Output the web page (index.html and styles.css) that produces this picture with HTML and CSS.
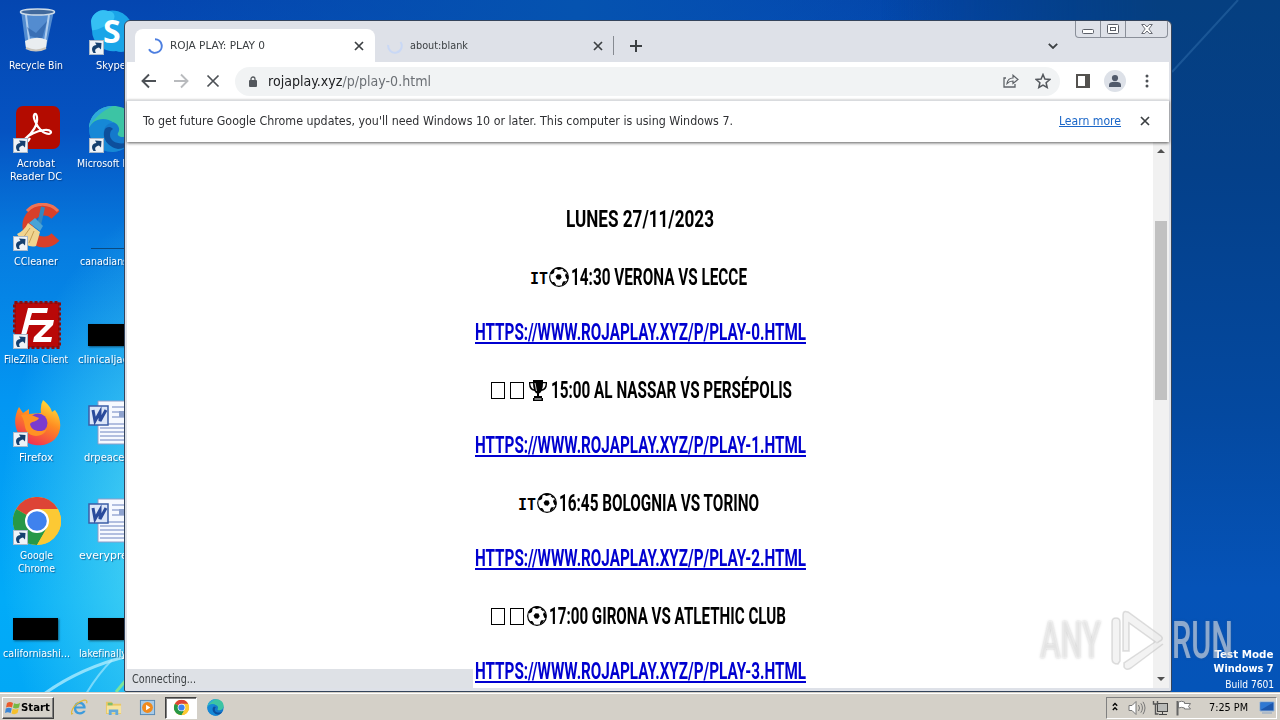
FILE: index.html
```html
<!DOCTYPE html>
<html lang="es">
<head>
  <meta charset="UTF-8" />
  <title>ROJA PLAY: PLAY 0</title>
  <link rel="stylesheet" href="styles.css">
</head>
<body>

  <!-- shared icons -->
  <svg class="defs" width="0" height="0">
    <symbol id="shortcut" viewBox="0 0 15 15">
      <rect x=".5" y=".5" width="14" height="14" fill="#eef3f8" stroke="#a9b8c9"/>
      <path d="M4.500 13C1.500 9 3.500 5 7.500 5L6 2.500 12.500 3 12 9.500 10 7.500C7 8 5 10 7 13Z" fill="#15406f"/>
    </symbol>
    <symbol id="word" viewBox="0 0 48 48">
      <path d="M10 2h37v43H10z" fill="#f6f9ff" stroke="#8d9dc8"/>
      <path d="M24 8h20M24 13h20M24 18h20M12 25h32M12 29h32M12 33h32M12 37h32M12 41h32" stroke="#6c83c0"/>
      <path d="M31 12h12v6H31z" fill="#8ea2ce"/>
      <rect x="1" y="7" width="19" height="19" fill="#dce6f8" stroke="#3b5da6" stroke-width="1.500"/>
      <path d="M5 11l2 11 5-9 0 9 6-11" fill="none" stroke="#2a4b9c" stroke-width="3"/>
    </symbol>
    <symbol id="chrome" viewBox="0 0 48 48">
      <circle cx="24" cy="24" r="24" fill="#fcc934"/>
      <path d="M24 24L3.200 12A24 24 0 0 1 44.800 12Z" fill="#dd4436"/>
      <path d="M24 24L3.200 12A24 24 0 0 0 24 48L34.400 30Z" fill="#279847"/>
      <path d="M24 12h20.800A24 24 0 0 1 24 48l10.400-18Z" fill="#fcc934"/>
      <circle cx="24" cy="24" r="12" fill="#fff"/>
      <circle cx="24" cy="24" r="9.800" fill="#3f82ee"/>
    </symbol>
    <symbol id="edge" viewBox="0 0 48 48">
      <circle cx="24" cy="24" r="23" fill="#1479cc"/>
      <path d="M1 23C2 8 14 1 25 1c14 0 22 9 22 19 0 8-6 12-12 12-4 0-6-2-5-4 3-4 0-10-6-11C13 15 4 17 1 23Z" fill="#3cc4a4"/>
      <path d="M1 23C2 8 14 1 25 1 14 6 5 14 1 23Z" fill="#2fa9dc"/>
      <path d="M1 24C4 13 18 11 26 18c-7-1-11 5-10 11 1 9 10 16 21 14A23 23 0 0 1 1 24Z" fill="#1688d6"/>
      <path d="M17 24c-4 9 3 18 13 20 5 0 10-3 13-8-9 5-21 2-21-6 0-3 1-5 3-6-3-3-6-2-8 0Z" fill="#0d4f9c"/>
    </symbol>
    <symbol id="ball" viewBox="0 0 20 20">
      <circle cx="10" cy="10" r="9.300" fill="#fff" stroke="#000" stroke-width="1.200"/>
      <path d="M8.500 7.200l3 .3 1.200 2.700-1.900 2.500-3-.4-1.200-2.700Z"/>
      <path d="M6.500 1.500l3 1.500 3.500-1-1-1.500h-4ZM1.500 6l1 1.500 2.500-1.500.5-3-1.500-.5ZM3 15l2.200 0 1.800 2.500-.5 1-3-2ZM13 17l1-2.500 3-.5-1.500 3-2.500 1.500ZM16 8.500l1-2.500 2 2 .3 4-1.800 0ZM13.500 3l2.500 2.300 1-.8-2-2Z"/>
    </symbol>
    <symbol id="close" viewBox="0 0 10 10">
      <path d="M1 1l8 8M9 1l-8 8" fill="none" stroke="currentColor" stroke-width="1.700"/>
    </symbol>
  </svg>

  <div class="desktop">
    <svg class="streaks" viewBox="0 0 1280 692">
      <path d="M44 694Q80 668 128 656" fill="none" stroke="#b5efff" stroke-width="3" opacity=".75"/>
      <path d="M86 694Q98 674 112 660" fill="none" stroke="#b5efff" stroke-width="2" opacity=".6"/>
      <path d="M116 692l10-12" stroke="#7be49a" stroke-width="3"/>
      <path d="M1172 72Q1205 36 1238 0" fill="none" stroke="#5d9bd4" stroke-width="2" opacity=".25"/>
    </svg>

    <div class="icons">
      <div class="item">
        <svg class="pic" viewBox="0 0 48 48">
          <path d="M8 4l5 37q10 6 20 0l8-37z" fill="#6da3da" opacity=".75"/>
          <path d="M13 8l4 32M36 8l-5 32" stroke="#d7e9fb" stroke-width="2" opacity=".7"/>
          <path d="M14 20l9 6 11-12-5 18-12-3z" fill="#24579f" opacity=".55"/>
          <path d="M12 34q11-6 22-1l-1 8q-10 5-20 0z" fill="#e9edf0"/>
          <ellipse cx="24.500" cy="5" rx="17" ry="3" fill="#41699c" stroke="#cfdce8" stroke-width="1.500"/>
          <path d="M13 41q10 5 20 0" fill="none" stroke="#c8c4bc" stroke-width="2"/>
        </svg>
        <p><span data-w="54">Recycle Bin</span></p>
      </div>
      <div class="item">
        <svg class="pic" viewBox="0 0 48 48">
          <path d="M3 14A13 13 0 0 1 20 4 21 21 0 0 1 45 28 13 13 0 0 1 28 44 21 21 0 0 1 4 23Z" fill="#1aa5e8"/>
          <path d="M3 14A13 13 0 0 1 20 4c8 0 9 9 1 13S7 24 4 23Z" fill="#35c0f4"/>
        </svg>
        <b class="skype-s">S</b>
        <svg class="arrow"><use href="#shortcut"/></svg>
        <p><span data-w="30">Skype</span></p>
      </div>
      <div class="item">
        <svg class="pic" viewBox="0 0 48 48">
          <rect x="3" y="1" width="44" height="43" rx="7" fill="#b30b00"/>
          <path d="M12 34C20 28 25 19 24 12 23 6 19 9 22 16 25 24 31 29 36 29 40 28 38 24 31 25 25 26 18 28 12 34 9 38 14 39 17 33" fill="none" stroke="#fff" stroke-width="2.200"/>
        </svg>
        <svg class="arrow"><use href="#shortcut"/></svg>
        <p><span data-w="38">Acrobat</span><br><span data-w="52">Reader DC</span></p>
      </div>
      <div class="item">
        <svg class="pic"><use href="#edge"/></svg>
        <svg class="arrow"><use href="#shortcut"/></svg>
        <p><span data-w="69">Microsoft Edge</span></p>
      </div>
      <div class="item">
        <svg class="pic" viewBox="0 0 48 48">
          <path d="M42.500 12A16 16 0 1 0 42.500 34" fill="none" stroke="#d8402a" stroke-width="11"/>
          <path d="M45 8A21 21 0 0 0 14 8" fill="none" stroke="#ef7354" stroke-width="3"/>
          <path d="M30 4l-4 18" stroke="#3487bf" stroke-width="4"/>
          <path d="M16 20l6-5 8 8-3 5Z" fill="#4aa3d6"/>
          <path d="M15 20l12 9-4 14q-10 3-19-12 7-3 11-11Z" fill="#f0d490"/>
          <path d="M17 25l-7 10M21 28l-5 12" stroke="#c69d53"/>
        </svg>
        <svg class="arrow"><use href="#shortcut"/></svg>
        <p><span data-w="44">CCleaner</span></p>
      </div>
      <div class="item">
        <svg class="pic" viewBox="0 0 48 48"><path d="M3 45.500h45" stroke="#0a4a80" stroke-width="1"/></svg>
        <p><span data-w="63">canadiansh...</span></p>
      </div>
      <div class="item">
        <svg class="pic" viewBox="0 0 48 48">
          <rect x="1.500" y="1.500" width="45" height="45" fill="#b90808" stroke="#8d0b0b" stroke-width="3" stroke-dasharray="3 2"/>
          <path d="M15 7h20l-1 5H19l-2 7h11l-1 5H16l-4 14H7Z" fill="#fff"/>
          <path d="M25 19h16l-1 5-12 12h11l-1 5H20l1-5 12-12h-9Z" fill="#fff"/>
        </svg>
        <svg class="arrow"><use href="#shortcut"/></svg>
        <p><span data-w="64">FileZilla Client</span></p>
      </div>
      <div class="item">
        <div class="pic"><i class="thumb"></i></div>
        <p><span data-w="66">clinicaljack...</span></p>
      </div>
      <div class="item">
        <svg class="pic" viewBox="0 0 48 48">
          <defs>
            <linearGradient id="fox" x1=".8" y1="0" x2=".3" y2="1">
              <stop offset="0" stop-color="#ffe63b"/><stop offset=".45" stop-color="#ff8b22"/><stop offset="1" stop-color="#ef2b56"/>
            </linearGradient>
          </defs>
          <path d="M30 1c6 5 8 8 9 12l3-2c7 9 7 22 0 29-9 9-26 8-33-1C1 31 0 19 6 8l4 6 6-4 0 5 12-1q-1-8 2-13Z" fill="url(#fox)"/>
          <circle cx="25" cy="24" r="9.500" fill="#7a3bd0"/>
          <path d="M8 16c8-2 12 1 18 3-2 4-7 3-9 6 1 7 10 9 17 5-4 9-17 9-21 1-2-5-1-9-5-15Z" fill="#ff9224"/>
        </svg>
        <svg class="arrow"><use href="#shortcut"/></svg>
        <p><span data-w="34">Firefox</span></p>
      </div>
      <div class="item">
        <svg class="pic"><use href="#word"/></svg>
        <p><span data-w="55">drpeace.rtf</span></p>
      </div>
      <div class="item">
        <svg class="pic"><use href="#chrome"/></svg>
        <svg class="arrow"><use href="#shortcut"/></svg>
        <p><span data-w="33">Google</span><br><span data-w="37">Chrome</span></p>
      </div>
      <div class="item">
        <svg class="pic"><use href="#word"/></svg>
        <p><span data-w="65">everypres...</span></p>
      </div>
      <div class="item">
        <div class="pic"><i class="thumb"></i></div>
        <p><span data-w="67">californiashi...</span></p>
      </div>
      <div class="item">
        <div class="pic"><i class="thumb"></i></div>
        <p><span data-w="64">lakefinally.jpg</span></p>
      </div>
    </div>

    <div class="build">
      <b data-w="59" data-from="right">Test Mode</b>
      <b data-w="60" data-from="right">Windows 7</b>
      <span data-w="49" data-from="right">Build 7601</span>
    </div>
  </div>

  <div class="window">
    <div class="tabs">
      <div class="tab active">
        <svg class="spin" viewBox="0 0 16 16"><path d="M8 1.200A6.800 6.800 0 1 1 2 11.300" fill="none" stroke="#4d7fe0" stroke-width="2"/></svg>
        <span class="title" data-w="95">ROJA PLAY: PLAY 0</span>
        <svg class="x"><use href="#close"/></svg>
      </div>
      <div class="tab">
        <svg class="spin" viewBox="0 0 16 16"><path d="M1.200 7A6.800 6.800 0 1 0 13.500 4" fill="none" stroke="#c9d8f5" stroke-width="2"/></svg>
        <span class="title" data-w="58">about:blank</span>
        <svg class="x"><use href="#close"/></svg>
      </div>
      <svg class="plus" viewBox="0 0 12 12"><path d="M6 0v12M0 6h12" stroke="#3c4043" stroke-width="2"/></svg>
      <svg class="chevron" viewBox="0 0 10 6"><path d="M.8.800L5 5 9.200.800" fill="none" stroke="#3c4043" stroke-width="1.800"/></svg>
      <div class="caption">
        <span><svg width="12" height="5"><rect x=".5" y=".5" width="11" height="4" rx="1" fill="#fff" stroke="#5b5f68"/></svg></span>
        <span><svg width="12" height="10"><rect x=".5" y=".5" width="11" height="9" rx="1" fill="#fff" stroke="#5b5f68"/><rect x="3.500" y="3.500" width="5" height="3" fill="none" stroke="#5b5f68"/></svg></span>
        <span><svg width="12" height="10" viewBox="0 0 12 10"><path d="M.7.500h3L6 3 8.300.500h3L7.800 5l3.500 4.500h-3L6 7 3.700 9.500h-3L4.200 5Z" fill="#fff" stroke="#5b5f68" stroke-width=".9"/></svg></span>
      </div>
    </div>

    <div class="toolbar">
      <svg class="nav" viewBox="0 0 16 16"><path d="M15 8H2M8 1.500L1.500 8 8 14.500" fill="none" stroke="#4d5156" stroke-width="1.900"/></svg>
      <svg class="nav" viewBox="0 0 16 16"><path d="M1 8h13M8 1.500L14.500 8 8 14.500" fill="none" stroke="#b9bbbe" stroke-width="1.900"/></svg>
      <svg class="nav" viewBox="0 0 16 16"><path d="M2.500 2.500l11 11M13.500 2.500l-11 11" stroke="#4d5156" stroke-width="1.700"/></svg>
      <div class="omnibox">
        <svg class="lock" viewBox="0 0 8 11"><path d="M2 5V3a2 2 0 0 1 4 0v2" fill="none" stroke="#54585d" stroke-width="1.300"/><rect y="4" width="8" height="7" rx="1" fill="#54585d"/></svg>
        <span class="url" data-w="163">rojaplay.xyz<i>/p/play-0.html</i></span>
        <svg class="share" viewBox="0 0 16 14"><path d="M3 4H1v9h11v-3" fill="none" stroke="#5f6368" stroke-width="1.300"/><path d="M4 9.500C4.500 6 6.500 4 10 4V1.200L15 5.500 10 9.500V7C7.500 7 6 7.500 4 9.500Z" fill="none" stroke="#5f6368" stroke-width="1.200"/></svg>
        <svg class="star" viewBox="0 0 16 16"><path d="M8 1.500l1.900 4.600 4.900.4-3.700 3.200 1.100 4.800L8 12l-4.200 2.500 1.100-4.800L1.200 6.500l4.900-.4Z" fill="none" stroke="#54585d" stroke-width="1.500"/></svg>
      </div>
      <svg class="panel" viewBox="0 0 14 14"><rect x="1" y="1" width="12" height="12" fill="#fff" stroke="#54524f" stroke-width="2"/><path d="M9 1h5v12H9z" fill="#54524f"/></svg>
      <svg class="avatar" viewBox="0 0 22 22"><circle cx="11" cy="11" r="11" fill="#dde1e8"/><circle cx="11" cy="8" r="3.100" fill="#515a6b"/><path d="M5 17v-2q0-3.200 6-3.200t6 3.200v2z" fill="#515a6b"/></svg>
      <svg class="dots" viewBox="0 0 4 14"><circle cx="2" cy="2" r="1.500"/><circle cx="2" cy="7" r="1.500"/><circle cx="2" cy="12" r="1.500"/></svg>
    </div>

    <div class="infobar">
      <span data-w="590">To get future Google Chrome updates, you'll need Windows 10 or later. This computer is using Windows 7.</span>
      <a href="#" data-w="62">Learn more</a>
      <svg class="x"><use href="#close"/></svg>
    </div>

    <div class="view">
      <div class="page">
        <div class="row"><span data-w="148">LUNES 27/11/2023</span></div>
        <div class="row match left"><em>IT</em><svg class="ball"><use href="#ball"/></svg><span data-w="176">14:30 VERONA VS LECCE</span></div>
        <div class="row link"><a href="#"><span data-w="331">HTTPS://WWW.ROJAPLAY.XYZ/P/PLAY-0.HTML</span></a></div>
        <div class="row match right"><i class="box"></i><i class="box"></i><svg class="cup" viewBox="0 0 18 21"><path d="M4 0h10v2h4v2q0 6-5.500 7-1 2-2.500 2.500V16h3v2h1v3H4v-3h1v-2h3v-2.500Q6.500 13 5.500 11 0 10 0 4V2h4Z"/><path d="M1.300 3.300H4q0 4 1 6Q1.300 8 1.300 3.300ZM16.700 3.300H14q0 4-1 6 3.700-1.300 3.700-6Z" fill="#fff"/><path d="M6 3l1.500 8" stroke="#fff" stroke-width=".8"/><path d="M5.500 19h7" stroke="#fff"/></svg><span data-w="241">15:00 AL NASSAR VS PERSÉPOLIS</span></div>
        <div class="row link"><a href="#"><span data-w="331">HTTPS://WWW.ROJAPLAY.XYZ/P/PLAY-1.HTML</span></a></div>
        <div class="row match left"><em>IT</em><svg class="ball"><use href="#ball"/></svg><span data-w="200">16:45 BOLOGNIA VS TORINO</span></div>
        <div class="row link"><a href="#"><span data-w="331">HTTPS://WWW.ROJAPLAY.XYZ/P/PLAY-2.HTML</span></a></div>
        <div class="row match tight"><i class="box"></i><i class="box"></i><svg class="ball"><use href="#ball"/></svg><span data-w="237">17:00 GIRONA VS ATLETHIC CLUB</span></div>
        <div class="row link"><a href="#"><span data-w="331">HTTPS://WWW.ROJAPLAY.XYZ/P/PLAY-3.HTML</span></a></div>
      </div>
      <div class="scrollbar"><i class="up"></i><i class="thumb-bar"></i><i class="down"></i></div>
      <div class="status"><span data-w="64">Connecting...</span></div>
    </div>
  </div>

  <div class="watermark">
    <span data-w="61">ANY</span>
    <svg viewBox="0 0 56 64">
      <path d="M3 50V13q0-4 4-4t4 4v39l-2 3q-6 0-6-5Z"/>
      <path d="M14 42V6q0-5 5-3l33 24q3 3-1 5l-3 2-28-20v28Z"/>
      <path d="M54 35L22 59q-5 3-7-1v-4l31-21"/>
    </svg>
    <span data-w="61">RUN</span>
  </div>

  <div class="taskbar">
    <div class="start">
      <svg viewBox="0 0 16 14"><path d="M2 2q3-2 6 0L7 6.500q-3-1.500-6 0Z" fill="#ea5b2c"/><path d="M9 2.300q3 1.500 6-.3l-1 4.500q-3 2-6 .3Z" fill="#77b843"/><path d="M.8 7.500q3-1.600 6 0L5.600 12q-3-1.600-5.600 0Z" fill="#3a86d6"/><path d="M7.700 7.800q3 1.500 6-.2l-1.200 4.500q-3 2-6 .3Z" fill="#f5c02c"/></svg>
      <b data-w="29">Start</b>
    </div>
    <div class="quick">
      <span><svg viewBox="0 0 18 18"><path d="M15.500 10H5.500q.5 4 4 4 2.500 0 3.500-1.500h2.500Q13.500 16.500 9.500 16.500 3 16 3 9.500 3.500 3 9.500 3q6 .5 6 7ZM5.500 8h7.200Q12 5.200 9.200 5.200 6.200 5.200 5.500 8Z" fill="#3d9bdc"/><path d="M2 15Q-1 18 1.500 11 5 4 13 1.500q5-1 3.500 3" fill="none" stroke="#e0b93a" stroke-width="1.300"/></svg></span>
      <span><svg viewBox="0 0 18 18"><path d="M1 3h6l1.500 2H17v11H1Z" fill="#e9c765"/><path d="M3 4h5v3H3z" fill="#7fbd6b"/><path d="M2 7h15v8H2z" fill="#f7e39d"/><path d="M4 17v-6h10v6h-3v-3H7v3Z" fill="#65a9d9"/></svg></span>
      <span><svg viewBox="0 0 18 18"><rect x="1.500" y="1.500" width="15" height="15" fill="#a8cbe8" stroke="#5488b5"/><circle cx="9" cy="9" r="5.700" fill="#f08a1d"/><path d="M7.500 6v6l4.500-3Z" fill="#fff"/></svg></span>
      <span class="open"><svg viewBox="-1 -1 20 20"><use href="#chrome" width="18" height="18"/></svg></span>
      <span><svg viewBox="0 0 18 18"><use href="#edge" width="18" height="18"/></svg></span>
    </div>
    <div class="tray">
      <svg class="more" viewBox="0 0 6 9"><path d="M.8 3.800L3 1.500 5.200 3.800M.8 8L3 5.700 5.200 8" fill="none" stroke="#000" stroke-width="1.300"/></svg>
      <svg class="speaker" viewBox="0 0 18 16"><path d="M1 5.500h3L8 1.500v13L4 10.500H1Z" fill="#fff" stroke="#777"/><path d="M10.500 5q2 3 0 6M12.800 3.300q3.300 4.700 0 9.400M15 1.800q4 6.200 0 12.400" fill="none" stroke="#777"/></svg>
      <svg class="net" viewBox="0 0 17 16"><rect x="5.500" y="3.500" width="10" height="8" fill="#b9bab8" stroke="#444"/><path d="M7 14.500h8M10.500 11.500v3" stroke="#444"/><path d="M1.500 1v3h4V1M3.500 4v10h3" fill="none" stroke="#555" stroke-width="1.400"/></svg>
      <svg class="flag" viewBox="0 0 16 16"><path d="M1.500 1v14.500" stroke="#666" stroke-width="2"/><path d="M2.500 2q3-1.500 6 0v1.500h6l-2 3 2 2.500H8.500V8q-3-1.300-6 0Z" fill="#fff" stroke="#777"/></svg>
      <span data-w="39">7:25 PM</span>
      <svg class="show" viewBox="0 0 16 13"><path d="M1 1h14v9H1z" fill="#1c57ad" stroke="#8fb1d8"/><path d="M1.500 9V1.500h13Z" fill="#2f78d3"/><path d="M3 12h10" stroke="#a3b3c6" stroke-width="1.500"/></svg>
    </div>
  </div>

  <script>
    // squeeze each label to the width it has to take up
    function fitLabels() {
      document.querySelectorAll('[data-w]').forEach(el => {
        const target = Number(el.dataset.w);
        const width = el.getBoundingClientRect().width;
        const side = el.dataset.from === 'right' ? 'Left' : 'Right';
        el.style['margin' + side] = (target - width) + 'px';
        el.style.transform = `scaleX(${target / width})`;
      });
    }

    fitLabels();
  </script>
</body>
</html>
```
FILE: styles.css
```css
* {
  box-sizing: border-box;
}

body {
  margin: 0;
  width: 1280px;
  height: 720px;
  overflow: hidden;
  font-family: 'DejaVu Sans Condensed', 'DejaVu Sans', sans-serif;
  font-size: 11px;
  color: #202124;
}

svg {
  display: block;
  flex: none;
}

p {
  margin: 0;
}

.defs {
  position: absolute;
}

[data-w] {
  display: inline-block;
  flex: none;
  white-space: nowrap;
  transform-origin: left center;
}

[data-from="right"] {
  transform-origin: right center;
}

/* desktop */
.desktop {
  position: relative;
  height: 692px;
  overflow: hidden;
  background:
    radial-gradient(ellipse 190px 330px at 190px 530px, rgba(110, 235, 240, .8), rgba(60, 200, 245, 0)),
    linear-gradient(to right, rgba(0, 80, 180, 0) 12%, #0553b0 45%, rgba(4, 66, 140, 0) 75%),
    linear-gradient(to right, rgba(0, 0, 0, 0) 60%, rgba(0, 62, 138, .55) 92%, rgba(0, 70, 160, .1)),
    linear-gradient(#0446b0 0, #0553c2 130px, #067bdf 240px, #0396f2 400px, #02abf8 600px, #02a8f6 692px);
}

.desktop::after {
  content: "";
  position: absolute;
  right: 0;
  top: 0;
  width: 400px;
  height: 692px;
  background: linear-gradient(#053f80 0, #04408a 25%, #0449a0 60%, #0553b8 85%, #0454b8);
  -webkit-mask-image: linear-gradient(to right, transparent, #000 280px);
  mask-image: linear-gradient(to right, transparent, #000 280px);
}

.streaks {
  position: absolute;
  inset: 0;
  z-index: 1;
}

.icons {
  display: grid;
  grid-template-columns: 72px 76px;
  grid-auto-rows: 98px;
  padding-top: 7px;
}

.item {
  position: relative;
  z-index: 2;
  display: flex;
  flex-direction: column;
  align-items: center;
}

.item:nth-child(even) {
  padding-left: 2px;
}

.item:nth-child(even) .pic {
  margin-left: 2px;
}

.pic {
  width: 48px;
  height: 48px;
  margin-left: 2px;
}

.arrow {
  position: absolute;
  left: 13px;
  top: 33px;
  width: 15px;
  height: 15px;
}

.item:nth-child(even) .arrow {
  left: 17px;
}

.skype-s {
  position: absolute;
  left: 31px;
  top: 4px;
  color: #fff;
  font: bold 32px/40px "Open Sans", sans-serif;
}

.item p {
  margin-top: 4px;
  color: #fff;
  line-height: 13px;
  text-align: center;
  text-shadow: 1px 1px 1px rgba(0, 30, 80, .5);
  white-space: nowrap;
}

.thumb {
  display: block;
  width: 45px;
  height: 22px;
  margin-top: 23px;
  background: #000;
  box-shadow: 1px 1px 2px rgba(0, 0, 0, .5);
}

.build {
  position: absolute;
  right: 6px;
  bottom: -1px;
  z-index: 2;
  display: flex;
  flex-direction: column;
  align-items: flex-end;
  color: #fff;
  line-height: 14px;
}

.build span {
  line-height: 17px;
}

/* browser window */
.window {
  position: absolute;
  left: 124px;
  top: 20px;
  z-index: 3;
  width: 1048px;
  height: 672px;
  display: flex;
  flex-direction: column;
  padding: 1px 2px 3px;
  border: 1px solid #34445c;
  border-radius: 6px 6px 2px 2px;
  background: #dee1e8;
  overflow: hidden;
}

.tabs {
  position: relative;
  display: flex;
  align-items: flex-end;
  height: 40px;
  padding-left: 8px;
}

.tab {
  display: flex;
  align-items: center;
  width: 239px;
  height: 33px;
  padding: 0 10px 0 12px;
  border-right: 1px solid #868a91;
  border-image: linear-gradient(transparent 22%, #868a91 22% 78%, transparent 78%) 1;
}

.tab.active {
  width: 240px;
  padding-right: 11px;
  border: 0;
  border-radius: 8px 8px 0 0;
  background: #fff;
}

.spin {
  width: 16px;
  height: 16px;
  margin-right: 7px;
}

.title {
  color: #3c4043;
}

.x {
  width: 10px;
  height: 10px;
  margin-left: auto;
  color: #3c4043;
}

.plus {
  width: 12px;
  height: 12px;
  margin: 0 0 10px 16px;
}

.chevron {
  width: 10px;
  height: 6px;
  margin: 0 111px 13px auto;
}

.caption {
  position: absolute;
  right: 1px;
  top: -1px;
  display: flex;
  width: 93px;
  height: 17px;
  border: 1px solid #8a8f99;
  border-top: 0;
  border-radius: 0 0 4px 4px;
}

.caption span {
  display: flex;
  align-items: center;
  justify-content: center;
  width: 25px;
  border-right: 1px solid #8a8f99;
}

.caption span:first-child svg {
  margin-top: 4px;
}

.caption span:last-child {
  flex: 1;
  border: 0;
}

.toolbar {
  display: flex;
  align-items: center;
  height: 38px;
  padding: 0 19px 0 14px;
  background: #fff;
}

.nav {
  width: 16px;
  height: 16px;
  margin-right: 16px;
}

.omnibox {
  display: flex;
  align-items: center;
  width: 825px;
  height: 29px;
  margin-left: -2px;
  padding: 0 9px 0 14px;
  border-radius: 15px;
  background: #f1f3f4;
}

.lock {
  width: 8px;
  height: 11px;
  margin-right: 11px;
}

.url {
  font-size: 14px;
}

.url i {
  font-style: normal;
  color: #6b6f74;
}

.share {
  width: 16px;
  height: 14px;
  margin-left: auto;
}

.star {
  width: 16px;
  height: 16px;
  margin-left: 16px;
}

.panel {
  width: 14px;
  height: 14px;
  margin-left: 16px;
}

.avatar {
  width: 22px;
  height: 22px;
  margin-left: 14px;
}

.dots {
  width: 4px;
  height: 14px;
  margin-left: 19px;
  fill: #4d5156;
}

.infobar {
  position: relative;
  z-index: 1;
  display: flex;
  align-items: center;
  height: 42px;
  padding: 0 19px 2px 16px;
  border-top: 1px solid #d9dbde;
  background: #fff;
  box-shadow: 0 1px 3px rgba(0, 0, 0, .65);
  font-size: 12px;
  color: #303134;
}

.infobar a {
  margin-left: auto;
  color: #1a66c8;
}

.infobar .x {
  margin-left: 19px;
}

.view {
  position: relative;
  display: flex;
  flex: 1;
  background: #fff;
  overflow: hidden;
}

.page {
  width: 1026px;
  padding-top: 49px;
  font: bold 24px/56px Roboto, sans-serif;
  color: #000;
}

.row {
  display: flex;
  align-items: center;
  justify-content: center;
  height: 55px;
}

.row.match {
  height: 58px;
  padding-top: 4px;
}

.row.link {
  padding-bottom: 2px;
}

.row.left {
  padding-right: 3px;
}

.row.right {
  padding-left: 3px;
}

.row.tight {
  padding-right: 3px;
}

.row.tight .ball {
  margin-left: -2px;
}

.row a {
  height: 26px;
  border-bottom: 2px solid #0000d0;
  color: #0000d0;
  line-height: 28px;
  text-decoration: none;
}

.row em {
  width: 18px;
  margin: 3px 1px 0 0;
  font: bold 15px/20px 'DejaVu Sans Mono', monospace;
}

.ball {
  width: 20px;
  height: 20px;
  margin-right: 2px;
}

.box {
  width: 14px;
  height: 17px;
  margin-right: 5px;
  border: 1px solid #000;
}

.cup {
  width: 18px;
  height: 21px;
  margin-right: 4px;
}

.scrollbar {
  display: flex;
  flex-direction: column;
  align-items: center;
  width: 16px;
  padding: 7px 0 7px;
  background: #f1f1f1;
}

.up,
.down {
  border: 4px solid transparent;
  border-top: 0;
  border-bottom-color: #505050;
}

.down {
  margin-top: auto;
  transform: rotate(180deg);
}

.thumb-bar {
  width: 12px;
  height: 179px;
  margin-top: 68px;
  background: #c1c1c1;
}

.status {
  position: absolute;
  left: 0;
  bottom: 0;
  width: 346px;
  height: 19px;
  padding-left: 5px;
  background: #dee1e6;
  font-size: 11.5px;
  line-height: 21px;
  color: #3c4043;
}

/* overlay logo */
.watermark {
  position: absolute;
  left: 1040px;
  top: 608px;
  z-index: 4;
  display: flex;
  align-items: center;
  height: 66px;
  color: rgba(255, 255, 255, .5);
  font: 500 51px/66px Roboto, sans-serif;
  text-shadow: 0 0 3px rgba(90, 90, 90, .35);
}

.watermark svg {
  width: 56px;
  height: 64px;
  margin: 0 7px 0 8px;
  fill: rgba(235, 235, 235, .6);
  stroke: rgba(190, 190, 190, .5);
  stroke-width: 1.5;
}

/* taskbar */
.taskbar {
  display: flex;
  align-items: center;
  height: 28px;
  padding: 2px 3px 0 2px;
  border-top: 1px solid #d4d0c8;
  box-shadow: inset 0 1px #fff;
  background: #d4d0c8;
  color: #000;
}

.start {
  display: flex;
  align-items: center;
  width: 52px;
  height: 22px;
  padding-left: 2px;
  border: 1px solid;
  border-color: #fff #404040 #404040 #fff;
  box-shadow: inset -1px -1px #808080;
}

.start svg {
  width: 16px;
  height: 14px;
}

.quick {
  display: flex;
  margin-left: 8px;
}

.quick span {
  display: flex;
  align-items: center;
  justify-content: center;
  width: 32px;
  height: 22px;
  margin: 0 1px;
}

.quick svg {
  width: 17px;
  height: 17px;
}

.quick .open {
  border: 1px solid;
  border-color: #404040 #fff #fff #404040;
  background: #fff;
  box-shadow: inset 1px 1px #808080;
}

.tray {
  display: flex;
  align-items: center;
  width: 171px;
  height: 22px;
  margin-left: auto;
  padding-left: 5px;
  border: 1px solid;
  border-color: #808080 #fff #fff #808080;
}

.more {
  width: 6px;
  height: 9px;
  margin-bottom: 2px;
}

.speaker {
  width: 18px;
  height: 16px;
  margin-left: 10px;
}

.net {
  width: 17px;
  height: 16px;
  margin-left: 6px;
}

.flag {
  width: 16px;
  height: 16px;
  margin-left: 7px;
}

.tray span {
  margin-left: 17px;
}

.show {
  width: 16px;
  height: 13px;
  margin-left: 11px;
}
```
